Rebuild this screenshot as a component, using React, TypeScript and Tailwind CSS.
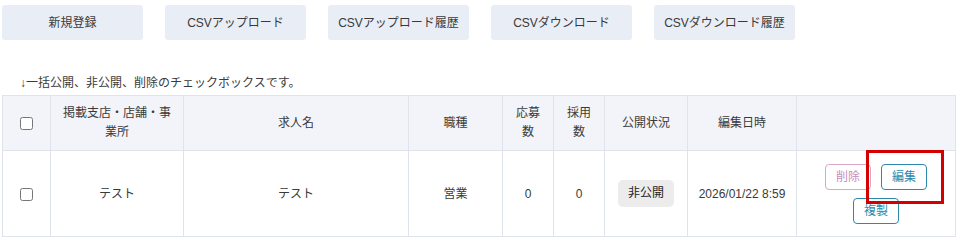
const topButtons = [
  "新規登録",
  "CSVアップロード",
  "CSVアップロード履歴",
  "CSVダウンロード",
  "CSVダウンロード履歴",
];

const cell = "border border-[#dfe4ec] text-center align-middle";

export default function App() {
  return (
    <div
      className="w-[961px] h-[244px] overflow-hidden bg-white text-[12px] text-[#3a3a3a]"
      style={{ fontFamily: '"Liberation Sans", "Noto Sans CJK JP", sans-serif' }}
    >
      <div className="flex gap-[22px] pl-[2px] pt-[5px]">
        {topButtons.map((label) => (
          <button
            key={label}
            type="button"
            className="w-[141px] h-[35px] rounded-[3px] bg-[#e9eef6] text-[12px] text-[#3a3a3a]"
          >
            {label}
          </button>
        ))}
      </div>

      <p className="mt-[34px] ml-[20px] leading-[18px]">
        ↓一括公開、非公開、削除のチェックボックスです。
      </p>

      <table className="mt-[3px] ml-[2px] w-[953px] table-fixed border-collapse">
        <colgroup>
          <col className="w-[48px]" />
          <col className="w-[133px]" />
          <col className="w-[225px]" />
          <col className="w-[94px]" />
          <col className="w-[51px]" />
          <col className="w-[51px]" />
          <col className="w-[83px]" />
          <col className="w-[109px]" />
          <col className="w-[159px]" />
        </colgroup>
        <thead>
          <tr className="h-[55px] bg-[#f2f4f9] leading-[19px]">
            <th className={`${cell} font-normal`}>
              <input type="checkbox" className="align-middle" />
            </th>
            <th className={`${cell} font-normal px-[8px]`}>掲載支店・店舗・事業所</th>
            <th className={`${cell} font-normal`}>求人名</th>
            <th className={`${cell} font-normal`}>職種</th>
            <th className={`${cell} font-normal px-[10px]`}>応募数</th>
            <th className={`${cell} font-normal px-[10px]`}>採用数</th>
            <th className={`${cell} font-normal`}>公開状況</th>
            <th className={`${cell} font-normal`}>編集日時</th>
            <th className={`${cell} font-normal`}></th>
          </tr>
        </thead>
        <tbody>
          <tr className="h-[86px]">
            <td className={cell}>
              <input type="checkbox" className="align-middle" />
            </td>
            <td className={cell}>テスト</td>
            <td className={cell}>テスト</td>
            <td className={cell}>営業</td>
            <td className={cell}>0</td>
            <td className={cell}>0</td>
            <td className={cell}>
              <span className="inline-block rounded-[5px] bg-[#ececec] px-[10px] leading-[27px] text-[#222]">
                非公開
              </span>
            </td>
            <td className={cell}>2026/01/22 8:59</td>
            <td className={`${cell} relative py-[12px]`}>
              <div className="flex flex-wrap justify-center gap-x-[10px] gap-y-[8px]">
                <button
                  type="button"
                  className="h-[26px] rounded-[4px] border border-[#d9a6cc] px-[10px] text-[#c98dba]"
                >
                  削除
                </button>
                <button
                  type="button"
                  className="h-[26px] rounded-[4px] border border-[#2c89ad] px-[10px] text-[#2c89ad]"
                >
                  編集
                </button>
                <button
                  type="button"
                  className="h-[26px] rounded-[4px] border border-[#2c89ad] px-[10px] text-[#2c89ad]"
                >
                  複製
                </button>
              </div>
              <div className="pointer-events-none absolute left-[69px] top-[-1px] w-[78px] h-[54px] border-[3px] border-[#d40000]" />
            </td>
          </tr>
        </tbody>
      </table>
    </div>
  );
}
